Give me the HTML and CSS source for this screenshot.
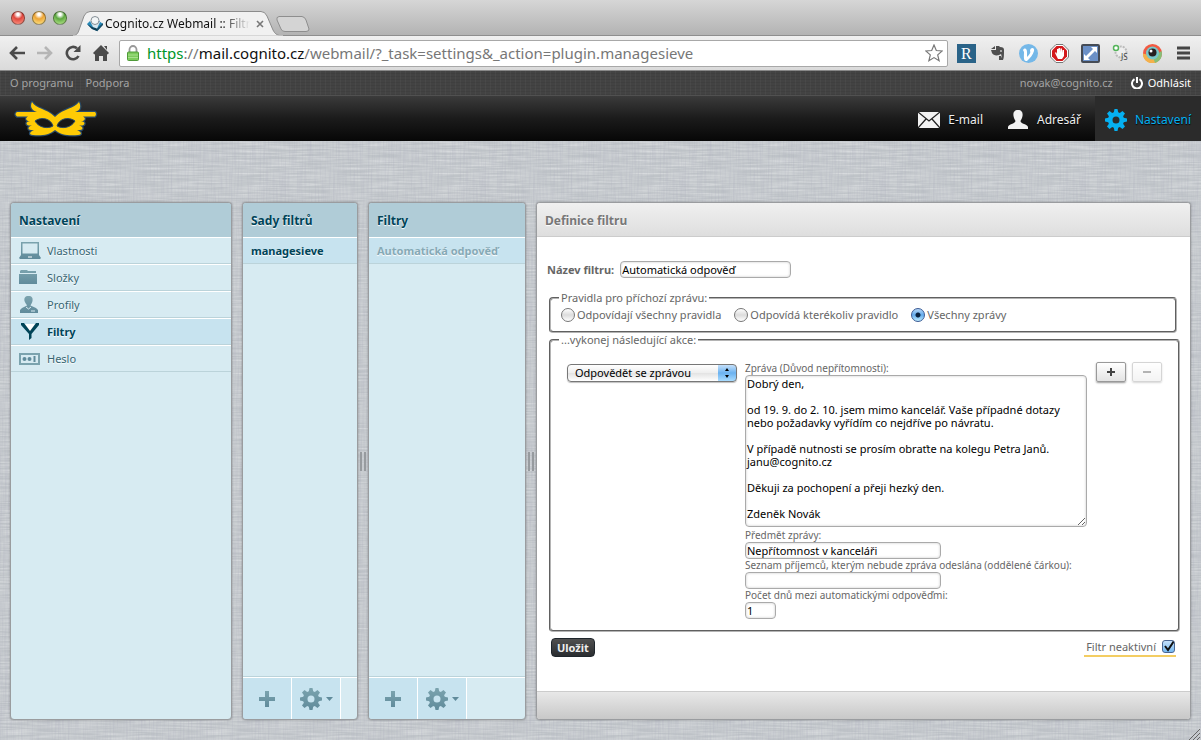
FILE: index.html
```
<!DOCTYPE html>
<html lang="cs">
<head>
  <meta charset="UTF-8">
  <meta name="viewport" content="width=device-width, initial-scale=1.0">
  <title>Cognito.cz Webmail :: Filtry</title>
  <link rel="stylesheet" href="styles.css">
</head>
<body>
  <!-- Shared icons -->
  <svg class="defs" width="0" height="0" aria-hidden="true">
    <linearGradient id="steel" x1="0" y1="0" x2="0" y2="1"><stop offset="0" stop-color="#7ba3ae"/><stop offset="1" stop-color="#608b9b"/></linearGradient>
    <symbol id="gear" viewBox="0 0 22 22">
      <path fill-rule="evenodd" d="M9.500 0h3l.7 3.200 1.600.7L17.500 2l2.500 2.500-1.900 2.700.7 1.600 3.200.7v3l-3.200.7-.7 1.600 1.900 2.700-2.500 2.500-2.700-1.900-1.600.7-.7 3.200h-3l-.7-3.200-1.600-.7L4.500 20 2 17.500l1.900-2.700-.7-1.600L0 12.500v-3l3.200-.7.7-1.600L2 4.500 4.500 2l2.700 1.900 1.600-.7zM11 7.500a3.500 3.500 0 1 0 0 7a3.500 3.500 0 1 0 0-7z"/>
    </symbol>
    <symbol id="plus" viewBox="0 0 18 18"><path d="M7 1h4v6h6v4h-6v6H7v-6H1V7h6z"/></symbol>
  </svg>

  <div class="tabstrip">
    <div class="lights">
      <button class="light red" aria-label="Zavřít"></button>
      <button class="light yellow" aria-label="Minimalizovat"></button>
      <button class="light green" aria-label="Zvětšit"></button>
    </div>
    <div class="tab">
      <svg class="tab-shape" width="210" height="25" viewBox="0 0 210 25">
        <path d="M0 25C4 24 5 22 6 19L11 5Q13 .5 17 .5H188Q192 .5 194 5L200 19C202 23 204 24 208 25z" fill="#f1f1f1" stroke="#8c8c8c"/>
        <path d="M0 25H210" stroke="#efefef"/>
      </svg>
      <div class="tab-content">
        <svg width="16" height="16" viewBox="0 0 16 16">
          <path d="M0 8L3 5h9l4 3-6 7-5-2z" fill="#2789b8"/>
          <path d="M0 8l5 5 5 2v-2.500L5 11z" fill="#123c52"/>
          <path d="M10 12.500L16 7v2l-6 6.500z" fill="#184e68"/>
          <path d="M3 5l3 6 4 1.500L13 6z" fill="#d9e6ed"/>
          <circle cx="8" cy="4.500" r="4" fill="#f2f5f6" stroke="#858f96"/>
        </svg>
        <span class="tab-title">Cognito.cz Webmail :: Filtry</span>
        <button class="tab-close" aria-label="Zavřít kartu"><svg width="8" height="8" viewBox="0 0 8 8"><path d="M1 1l6 6M7 1L1 7" stroke="#777" stroke-width="1.600"/></svg></button>
      </div>
    </div>
    <button class="new-tab" aria-label="Nová karta"><svg width="34" height="17" viewBox="0 0 34 17"><path d="M3 .5H26Q29 1 30 4L33 13Q33 15.500 30 15.500H9Q6 15.500 5 13L1 4Q0 1 3 .5z" fill="#d4d4d4" stroke="#8e8e8e"/></svg></button>
  </div>

  <div class="toolbar">
    <div class="nav-buttons">
      <button aria-label="Zpět"><svg width="16" height="14" viewBox="0 0 16 14"><path d="M8 1L2 7l6 6M2 7h14" fill="none" stroke="#4b4b4b" stroke-width="2.600"/></svg></button>
      <button aria-label="Vpřed"><svg width="16" height="14" viewBox="0 0 16 14"><path d="M8 1l6 6-6 6M0 7h14" fill="none" stroke="#b5b5b5" stroke-width="2.600"/></svg></button>
      <button aria-label="Obnovit"><svg width="16" height="16" viewBox="0 0 16 16"><path d="M13.500 11A6.200 6.200 0 1 1 12 3.300" fill="none" stroke="#4b4b4b" stroke-width="2.600"/><path d="M15.500 0v7H8.500z" fill="#4b4b4b"/></svg></button>
      <button aria-label="Domů"><svg width="16" height="16" viewBox="0 0 16 16"><path d="M8 0l8 8-1.500 1.500L14 9v7h-4v-5H6v5H2V9l-.5.5L0 8zM11 1h3v4z" fill="#4b4b4b"/></svg></button>
    </div>
    <div class="address">
      <svg width="12" height="16" viewBox="0 0 12 16"><path d="M2.500 8V4.500a3.500 3.500 0 0 1 7 0V8" fill="none" stroke="#999" stroke-width="1.800"/><rect x=".5" y="7" width="11" height="8.500" rx="1" fill="#7ccb5b" stroke="#4f9a39"/><path d="M1 10h10M1 12.500h10" stroke="#a8df8d"/></svg>
      <div class="url"><span class="scheme">https</span>://<span class="host">mail.cognito.cz</span>/webmail/?_task=settings&amp;_action=plugin.managesieve</div>
      <button aria-label="Přidat záložku"><svg width="18" height="18" viewBox="0 0 18 18"><path d="M9 1l2.300 5.500 5.900.5-4.500 3.900 1.400 5.800L9 13.600l-5.100 3.100 1.400-5.800L.8 7l5.900-.5z" fill="#fff" stroke="#777" stroke-width="1.200"/></svg></button>
    </div>
    <div class="extensions">
      <svg width="19" height="19" viewBox="0 0 19 19"><rect width="19" height="19" fill="#2a6388"/><text class="ext-r" x="4" y="15">R</text></svg>
      <svg width="19" height="19" viewBox="0 0 19 19"><path d="M3 5l4-3v3zM8 2h3l1 1c3 0 4 1 4 3 0 5 0 8-1 10h-4v-4h2v2c1-1 .5-3 0-4l-2 1c-3 1-6 0-7-2L3 6h5z" fill="#4e4e4e"/><path d="M12 7h2" stroke="#fff"/></svg>
      <svg width="19" height="19" viewBox="0 0 19 19"><circle cx="9.500" cy="9.500" r="9.500" fill="#75b8e8"/><path d="M4 6c2-3 4-1 4 2v5c3-3 4-5 3-6 0-4 5-4 4 0-1 4-4 7-7 10-4 1-3-5-3-9z" fill="#fff"/></svg>
      <svg width="19" height="19" viewBox="0 0 19 19"><path d="M6 .5h7L18.500 6v7L13 18.500H6L.5 13V6z" fill="#fff" stroke="#777"/><path d="M6.500 2h6L17 6.500v6L12.500 17h-6L2 12.500v-6z" fill="#d3191c"/><path d="M5 9l1-1 1 2V5h1.500v3V4H10v4l.5-3.500H12V9l.5-3H14v6l-2 3H8z" fill="#fff"/></svg>
      <svg width="19" height="19" viewBox="0 0 19 19"><rect x="1" y="1" width="17" height="17" rx="1" fill="#6b90c7" stroke="#454b55" stroke-width="2"/><path d="M10 3h6v6l-2-2-7 7 2 2H3v-6l2 2 7-7z" fill="#fff"/></svg>
      <svg width="19" height="19" viewBox="0 0 19 19"><circle cx="9" cy="8" r="5.500" fill="#eee" stroke="#bbb" stroke-width="2" stroke-dasharray="2 1"/><circle cx="4" cy="4" r="2.500" fill="#fff" stroke="#54b45a" stroke-width="1.500"/><text class="ext-js" x="9" y="16">JS</text></svg>
      <svg width="19" height="19" viewBox="0 0 19 19"><circle cx="9.500" cy="9.500" r="9.500" fill="#f15a42"/><path d="M0 9.500a9.500 9.500 0 0 0 15 8l-4-5z" fill="#f4b14b"/><path d="M18.500 7A9.500 9.500 0 0 1 12 19l-2-6z" fill="#86bf78"/><circle cx="9.500" cy="9" r="6.500" fill="#78c7ca"/><circle cx="9.500" cy="8.500" r="4" fill="#261f20"/><circle cx="8" cy="7" r="1.500" fill="#fff"/></svg>
      <button class="menu" aria-label="Nabídka"><svg width="13" height="14" viewBox="0 0 13 14"><path d="M0 2h13M0 7h13M0 12h13" stroke="#454545" stroke-width="3"/></svg></button>
    </div>
  </div>

  <div class="topline">
    <a href="#about">O programu</a>
    <a href="#support">Podpora</a>
    <span class="user">novak@cognito.cz</span>
    <a class="logout" href="#logout">
      <svg width="12" height="12" viewBox="0 0 12 12"><path d="M3.500 2.200a5 5 0 1 0 5 0M6 0v6" fill="none" stroke="#fff" stroke-width="2"/></svg>
      Odhlásit
    </a>
  </div>

  <header class="header">
    <a class="logo" href="#home" aria-label="Cognito">
      <svg width="84" height="38" viewBox="0 0 84 38">
        <path d="M18 2C22 9 32 8 41 17C50 8 60 9 65 2C68 8 65 11 61 12H81Q83 14 81 16.500H69C71 18 72 19 69 21H67C72 22 71 25 68 25.500H65C70 27 69 30 66 30H63C68 32 68 35 64 35C55 36 47 35 41 30C35 35 27 36 19 35C15 35 15 32 20 30H17C14 30 13 27 18 25.500H15C12 25 11 22 16 21H14C11 19 12 18 14 16.500H3Q0 14 3 12H23C17 10 16 6 18 2z" fill="#ffcb05" stroke="#294a67" stroke-width="2.500" stroke-linejoin="round" paint-order="stroke"/>
        <path d="M21 21C28 16 37 19 39 26C34 29 25 28 21 21zM61 21C54 16 45 19 43 26C48 29 57 28 61 21z" fill="#181818" stroke="#294a67"/>
      </svg>
    </a>
    <nav class="tasks">
      <a href="#mail"><svg width="22" height="16" viewBox="0 0 22 16"><path d="M0 0h22v16H0z" fill="#f2f2f2"/><path d="M0 0l11 9L22 0M0 16l8-9M22 16l-8-9" fill="none" stroke="#222" stroke-width="1.300"/></svg>E-mail</a>
      <a href="#contacts"><svg width="22" height="20" viewBox="0 0 22 20"><path d="M11 0c4 0 5 3 4.500 6-.3 2-1.500 4-2 5 0 3 7 3 7.500 6v2H1v-2c.5-3 7-3 7.500-6-.5-1-1.700-3-2-5C6 3 7 0 11 0z" fill="#f2f2f2"/></svg>Adresář</a>
      <a class="selected" href="#settings"><svg width="22" height="22" fill="#05b0f1"><use href="#gear"/></svg>Nastavení</a>
    </nav>
  </header>

  <main class="main">
    <section class="panel">
      <h2>Nastavení</h2>
      <ul class="list">
        <li><a href="#preferences"><svg width="22" height="18" viewBox="0 0 22 18"><path fill="url(#steel)" fill-rule="evenodd" d="M2 0h18v13H2zM3.500 1.500v10h15v-10zM2 13h18l2 3-1 1H1l-1-1z"/><path d="M9 15h4" stroke="#fff"/></svg>Vlastnosti</a></li>
        <li><a href="#folders"><svg width="22" height="18" viewBox="0 0 22 18"><path fill="url(#steel)" d="M1 3V2l1-1h6l1 1h8v2H1zM0 5h18v10H0z"/></svg>Složky</a></li>
        <li><a href="#profiles"><svg width="22" height="18" viewBox="0 0 22 18"><path fill="url(#steel)" d="M9.500 0C13 0 14 2 13.500 5c-.3 2-1.500 3-2 4.500L17 12l2 2v3H1v-3l2-2 5-2.500C7.500 8 6 7 5.500 5 5 2 6 0 9.500 0z"/><path d="M7 11l2.500 2 2.500-2M12 15h4" fill="none" stroke="#d7ebf2"/></svg>Profily</a></li>
        <li class="selected"><a href="#filters"><svg width="22" height="18" viewBox="0 0 22 18"><path d="M4 1h14l-7 8z" fill="#fff"/><path d="M2 0h3l6 8 6-8h3v2l-7.500 9v4L10 17v-6L2 2z" fill="#004458"/></svg>Filtry</a></li>
        <li><a href="#password"><svg width="22" height="18" viewBox="0 0 22 18"><path fill="none" stroke="#7ba3ae" stroke-width="2" d="M1 4h19v10H1z"/><circle cx="5.500" cy="9" r="2" fill="#608b9b"/><circle cx="10.500" cy="9" r="2" fill="#608b9b"/><path d="M15.500 6v6" stroke="#608b9b" stroke-width="2"/></svg>Heslo</a></li>
      </ul>
    </section>

    <div class="splitter blank"></div>

    <section class="panel">
      <h2>Sady filtrů</h2>
      <ul class="list">
        <li class="selected"><a href="#managesieve">managesieve</a></li>
      </ul>
      <div class="panel-footer">
        <button aria-label="Přidat sadu"><svg width="18" height="18" fill="url(#steel)"><use href="#plus"/></svg></button>
        <button aria-label="Akce sady"><svg width="22" height="22" fill="url(#steel)"><use href="#gear"/></svg><svg width="7" height="4"><path d="M0 0h7L3.500 4z" fill="#608b9b"/></svg></button>
      </div>
    </section>

    <div class="splitter"></div>

    <section class="panel">
      <h2>Filtry</h2>
      <ul class="list">
        <li class="selected disabled"><a href="#auto">Automatická odpověď</a></li>
      </ul>
      <div class="panel-footer">
        <button aria-label="Přidat filtr"><svg width="18" height="18" fill="url(#steel)"><use href="#plus"/></svg></button>
        <button aria-label="Akce filtru"><svg width="22" height="22" fill="url(#steel)"><use href="#gear"/></svg><svg width="7" height="4"><path d="M0 0h7L3.500 4z" fill="#608b9b"/></svg></button>
      </div>
    </section>

    <div class="splitter"></div>

    <section class="panel content">
      <h2>Definice filtru</h2>
      <form class="filter-form">
        <div class="name-row">
          <label for="name">Název filtru:</label>
          <input type="text" id="name" value="Automatická odpověď">
        </div>

        <fieldset class="rules">
          <legend>Pravidla pro příchozí zprávu:</legend>
          <div class="radios">
            <label><input type="radio" name="join">Odpovídají všechny pravidla</label>
            <label><input type="radio" name="join">Odpovídá kterékoliv pravidlo</label>
            <label><input type="radio" name="join" checked>Všechny zprávy</label>
          </div>
        </fieldset>

        <fieldset>
          <legend>...vykonej následující akce:</legend>
          <div class="action">
            <select aria-label="Akce">
              <option>Odpovědět se zprávou</option>
            </select>
            <div class="vacation">
              <label for="reason">Zpráva (Důvod nepřítomnosti):</label>
              <textarea id="reason">Dobrý den,

od 19. 9. do 2. 10. jsem mimo kancelář. Vaše případné dotazy nebo požadavky vyřídím co nejdříve po návratu.

V případě nutnosti se prosím obraťte na kolegu Petra Janů.
janu@cognito.cz

Děkuji za pochopení a přeji hezký den.

Zdeněk Novák</textarea>
              <label for="subject">Předmět zprávy:</label>
              <input type="text" id="subject" value="Nepřítomnost v kanceláři">
              <label for="addresses">Seznam příjemců, kterým nebude zpráva odeslána (oddělené čárkou):</label>
              <input type="text" id="addresses">
              <label for="days">Počet dnů mezi automatickými odpověďmi:</label>
              <input class="short" type="text" id="days" value="1">
            </div>
            <div class="row-buttons">
              <button type="button" aria-label="Přidat akci"><svg width="8" height="8"><path d="M4 0v8M0 4h8" stroke="#444" stroke-width="2"/></svg></button>
              <button type="button" aria-label="Odebrat akci" disabled><svg width="8" height="8"><path d="M0 4h8" stroke="#444" stroke-width="2"/></svg></button>
            </div>
          </div>
        </fieldset>

        <div class="form-footer">
          <button class="save" type="button">Uložit</button>
          <label class="inactive">Filtr neaktivní <input type="checkbox" checked></label>
        </div>
      </form>
      <div class="content-footer"></div>
    </section>
  </main>
  <svg class="grip" width="11" height="11"><path d="M0 11L11 0M4 11l7-7M8 11l3-3" stroke="#666"/></svg>
</body>
</html>
```
FILE: styles.css
```
* {
  box-sizing: border-box;
}

body {
  margin: 0;
  min-height: 100vh;
  display: flex;
  flex-direction: column;
  font-family: "Lucida Grande", "Noto Sans", sans-serif;
  font-size: 11px;
  line-height: 14px;
  color: #666;
  /* linen texture */
  background: #bfc4c8 url("data:image/svg+xml,%3Csvg xmlns='http://www.w3.org/2000/svg' width='200' height='200'%3E%3Cfilter id='h' x='0' y='0' width='1' height='1'%3E%3CfeTurbulence type='fractalNoise' baseFrequency='.03 .6' numOctaves='2' stitchTiles='stitch'/%3E%3CfeColorMatrix values='0 0 0 0 1 0 0 0 0 1 0 0 0 0 1 .7 0 0 0 -.22'/%3E%3C/filter%3E%3Cfilter id='v' x='0' y='0' width='1' height='1'%3E%3CfeTurbulence type='fractalNoise' baseFrequency='.6 .03' numOctaves='2' stitchTiles='stitch'/%3E%3CfeColorMatrix values='0 0 0 0 .4 0 0 0 0 .4 0 0 0 0 .5 .6 0 0 0 -.22'/%3E%3C/filter%3E%3Crect width='200' height='200' filter='url(%23h)'/%3E%3Crect width='200' height='200' filter='url(%23v)'/%3E%3C/svg%3E");
}

a {
  color: inherit;
  text-decoration: none;
}

button {
  font: inherit;
  border: 0;
  padding: 0;
  background: none;
}

svg {
  flex: none;
  display: block;
}

.defs {
  position: absolute;
}

/* Browser window */
.tabstrip {
  height: 36px;
  display: flex;
  align-items: flex-end;
  border-bottom: 1px solid #8e8e8e;
  background: linear-gradient(#d6d6d6, #b3b3b3);
}

.lights {
  display: flex;
  gap: 7px;
  padding: 0 6px 10px 11px;
}

.light {
  width: 14px;
  height: 14px;
  border-radius: 50%;
  border: 1px solid rgba(0, 0, 0, 0.4);
}

.red {
  background: radial-gradient(circle at 50% 20%, #fff 0 10%, #e0463c 40%, #ffa08e);
}

.yellow {
  background: radial-gradient(circle at 50% 20%, #fff 0 10%, #eda435 40%, #ffed91);
}

.green {
  background: radial-gradient(circle at 50% 20%, #fff 0 10%, #5da840 40%, #c0ef94);
}

.tab {
  display: grid;
  margin-bottom: -1px;
}

.tab-shape,
.tab-content {
  grid-area: 1 / 1;
}

.tab-content {
  display: flex;
  align-items: center;
  gap: 2px;
  padding: 0 17px 0 14px;
  width: 208px;
}

.tab-title {
  flex: 1;
  min-width: 0;
  font-size: 12px;
  color: #111;
  overflow: hidden;
  white-space: nowrap;
  -webkit-mask-image: linear-gradient(90deg, #000 80%, transparent);
  mask-image: linear-gradient(90deg, #000 80%, transparent);
}

.tab-close {
  padding-left: 4px;
}

.new-tab {
  margin-left: -7px;
  padding-bottom: 2px;
}

.toolbar {
  height: 35px;
  display: flex;
  align-items: center;
  padding: 0 11px 0 9px;
  border-bottom: 1px solid #888;
  background: linear-gradient(#f0f0f0, #dadada);
}

.nav-buttons {
  display: flex;
  align-items: center;
  gap: 12px;
}

.address {
  flex: 1;
  display: flex;
  align-items: center;
  gap: 8px;
  height: 27px;
  margin: 0 9px 0 10px;
  padding: 0 4px 0 7px;
  border: 1px solid #a8a8a8;
  border-radius: 2px;
  background: #fff;
}

.url {
  flex: 1;
  font-size: 15px;
  line-height: 20px;
  color: #777;
}

.scheme {
  color: #00962a;
}

.host {
  color: #111;
}

.extensions {
  display: flex;
  align-items: center;
  gap: 12px;
}

.menu {
  margin-left: 3px;
}

.ext-r {
  font: 16px "Liberation Serif", serif;
  fill: #fff;
}

.ext-js {
  font: 8px "Noto Sans", sans-serif;
  fill: #444;
}

/* Webmail header */
.topline {
  height: 24px;
  display: flex;
  align-items: center;
  gap: 12px;
  padding: 0 10px;
  color: #a3a3a3;
  background-color: #434343;
  background-image:
    repeating-linear-gradient(90deg, rgba(255, 255, 255, 0.03) 0 1px, transparent 1px 5px),
    repeating-linear-gradient(0deg, rgba(0, 0, 0, 0.06) 0 1px, transparent 1px 3px);
}

.user {
  margin-left: auto;
  margin-right: 6px;
}

.logout {
  display: flex;
  align-items: center;
  gap: 5px;
  color: #fff;
}

.header {
  height: 46px;
  display: flex;
  justify-content: space-between;
  align-items: center;
  padding-left: 14px;
  border-top: 1px solid #515151;
  background: linear-gradient(#3b3b3b, #1b1b1b 50%, #070707);
}

.tasks {
  display: flex;
  gap: 4px;
  height: 100%;
}

.tasks a {
  display: flex;
  align-items: center;
  gap: 8px;
  padding: 2px 10px 0;
  font-size: 12px;
  color: #eee;
  text-shadow: 0 1px 1px #000;
}

.tasks .selected {
  color: #05b0f1;
  background: #2b2b2b;
}

/* Panels */
.main {
  flex: 1;
  display: grid;
  grid-template-columns: 222px 10px 116px 10px 158px 10px 1fr;
  padding: 61px 10px 20px;
}

.panel {
  display: flex;
  flex-direction: column;
  overflow: hidden;
  border: 1px solid #9a9c9f;
  border-radius: 4px;
  box-shadow: 0 0 2px rgba(0, 0, 0, 0.35);
  background: #d7ebf2;
}

.panel h2 {
  margin: 0;
  height: 34px;
  padding: 0 8px;
  font-size: 12px;
  line-height: 36px;
  color: #004458;
  text-shadow: 0 1px 1px #fff;
  background: #b0ccd7;
  border-bottom: 1px solid #b0ccd7;
}

.list {
  flex: 1;
  margin: 0;
  padding: 0;
  list-style: none;
}

.list a {
  display: flex;
  align-items: center;
  gap: 6px;
  height: 27px;
  padding: 0 8px;
  color: #376572;
  text-shadow: 0 1px 1px #fff;
  border-top: 1px solid #fff;
  border-bottom: 1px solid #bbd3da;
}

.list .selected a {
  font-weight: bold;
  color: #004458;
  background: #c7e3ef;
}

.list .disabled a {
  color: #86a9b5;
}

.panel-footer {
  display: flex;
  height: 42px;
  border-top: 1px solid #fff;
  box-shadow: 0 -1px #bbd3da;
}

.panel-footer button {
  display: flex;
  align-items: center;
  justify-content: center;
  gap: 4px;
  width: 49px;
  border-right: 1px solid #fff;
  background: #c7e3ef;
}

.splitter {
  display: flex;
  align-items: center;
  justify-content: center;
}

.splitter::before {
  content: "";
  width: 2px;
  height: 19px;
  border: solid #979b9f;
  border-width: 0 2px;
}

.blank::before {
  content: none;
}

/* Filter form */
.content {
  background: #fff;
}

.content h2 {
  color: #777;
  background: linear-gradient(#f0f0f0, #dedede);
  border-bottom-color: #ccc;
}

.filter-form {
  flex: 1;
  padding: 24px 11px 0 10px;
}

input,
select,
textarea {
  margin: 0;
  font: inherit;
  color: #000;
  border: 1px solid #aaa;
  border-radius: 4px;
}

input[type="text"],
textarea {
  display: block;
  padding: 0 1px;
  background: #fff;
  box-shadow: inset 0 0 2px 1px rgba(0, 0, 0, 0.1);
}

input[type="text"] {
  width: 196px;
  height: 17px;
}

.name-row {
  display: flex;
  align-items: center;
  gap: 6px;
  margin-bottom: 13px;
}

.name-row label {
  font-weight: bold;
}

.name-row input[type="text"] {
  width: 171px;
}

fieldset {
  margin: 0 0 0 2px;
  padding: 0 8px 11px;
  border: 2px groove #b4b4b4;
  border-radius: 4px;
}

legend {
  padding: 0 2px;
}

.rules {
  margin-right: 2px;
  padding-bottom: 8px;
}

.radios {
  display: flex;
  gap: 13px;
  padding: 3px 2px 1px;
}

.radios label {
  display: flex;
  align-items: center;
  gap: 2px;
}

input[type="radio"] {
  appearance: none;
  width: 14px;
  height: 14px;
  border: 1px solid #777;
  border-radius: 50%;
  background: linear-gradient(#fff, #dcdcdc 50%, #fff);
}

input[type="radio"]:checked {
  border-color: #3a5a94;
  background: radial-gradient(circle, #0a2340 0 2px, transparent 3px), linear-gradient(#b5d7f8, #62abed 50%, #bdecff);
}

.action {
  display: flex;
  align-items: flex-start;
  padding: 15px 8px 0;
}

select {
  appearance: none;
  width: 170px;
  height: 18px;
  margin: 2px 8px 0 0;
  padding: 0 7px;
  border-color: #777;
  background:
    url("data:image/svg+xml,%3Csvg xmlns='http://www.w3.org/2000/svg' width='18' height='16'%3E%3ClinearGradient id='g' x2='0' y2='1'%3E%3Cstop stop-color='%23c5e0fa'/%3E%3Cstop offset='.5' stop-color='%236bb2f0'/%3E%3Cstop offset='1' stop-color='%23a9dcff'/%3E%3C/linearGradient%3E%3Crect width='18' height='16' fill='url(%23g)'/%3E%3Cpath d='M7 6l2-3 2 3zM7 10l2 3 2-3z'/%3E%3C/svg%3E") right top no-repeat,
    linear-gradient(#fff, #eee 50%, #e2e2e2 50%, #fff);
  box-shadow: 0 1px 1px rgba(0, 0, 0, 0.25);
}

.vacation {
  width: 342px;
}

.vacation label {
  display: block;
  font-size: 10px;
  line-height: 13px;
  white-space: nowrap;
}

textarea {
  width: 100%;
  height: 152px;
  margin-bottom: 2px;
  padding-top: 1px;
  line-height: 13px;
  overflow: hidden;
}

.vacation .short {
  width: 31px;
}

.row-buttons {
  display: flex;
  gap: 6px;
  margin-left: 9px;
}

.row-buttons button {
  display: flex;
  align-items: center;
  justify-content: center;
  width: 30px;
  height: 20px;
  border: 1px solid #999;
  border-radius: 2px;
  background: linear-gradient(#fff, #e4e4e4);
  box-shadow: 0 1px 2px rgba(0, 0, 0, 0.4);
}

.row-buttons button:disabled {
  opacity: 0.4;
}

.form-footer {
  display: flex;
  justify-content: space-between;
  align-items: flex-start;
  padding: 6px 3px 0 4px;
}

.save {
  height: 19px;
  padding: 0 5px;
  font-weight: bold;
  color: #eee;
  border: 1px solid #1f262c;
  border-radius: 4px;
  background: linear-gradient(#505050, #2a2d30);
}

.inactive {
  display: flex;
  align-items: center;
  gap: 6px;
  height: 19px;
  padding: 0 1px 0 2px;
  border-bottom: 2px solid #f3cd62;
}

input[type="checkbox"] {
  appearance: none;
  width: 13px;
  height: 13px;
  border: 1px solid #4a6692;
  border-radius: 3px;
  background:
    url("data:image/svg+xml,%3Csvg xmlns='http://www.w3.org/2000/svg' viewBox='0 0 11 11'%3E%3Cpath d='M2 5l3 4 6-9' fill='none' stroke='%23111' stroke-width='2'/%3E%3C/svg%3E"),
    linear-gradient(#c5e0fa, #75b9f2);
}

.content-footer {
  height: 28px;
  border-top: 1px solid #ccc;
  background: linear-gradient(#e8e8e8, #c8c8c8);
}

.grip {
  position: fixed;
  right: 1px;
  bottom: 0;
}
```
